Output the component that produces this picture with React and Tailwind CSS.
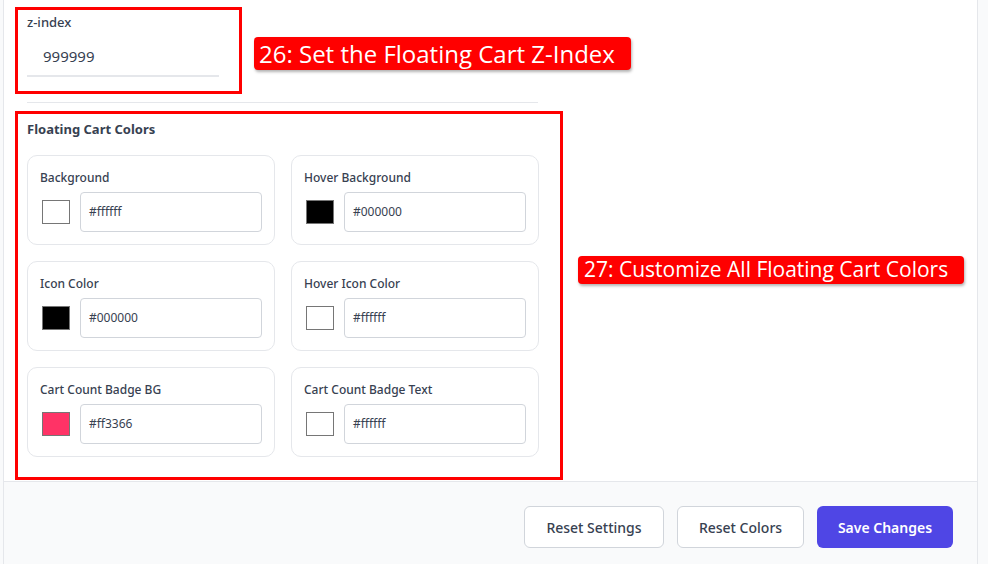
import React from "react";

const font = { fontFamily: '"Noto Sans", "Open Sans", sans-serif' };

function ColorCard({ label, value, swatch }) {
  return (
    <div className="h-[90px] rounded-[10px] border border-[#e5e7eb] bg-white pl-[12px] pr-[12px] pt-[14px]">
      <div className="text-[12px] font-medium leading-[16px] text-[#374151]">{label}</div>
      <div className="mt-[6px] flex items-center">
        <div
          className="ml-[2px] h-[24px] w-[28px] border border-[#767676]"
          style={{ background: swatch }}
        />
        <div className="ml-[10px] flex h-[40px] w-[182px] items-center rounded-[4px] border border-[#d1d5db] bg-white pl-[8px] text-[12px] text-[#374151]">
          {value}
        </div>
      </div>
    </div>
  );
}

export default function App() {
  const cards = [
    ["Background", "#ffffff", "#ffffff"],
    ["Hover Background", "#000000", "#000000"],
    ["Icon Color", "#000000", "#000000"],
    ["Hover Icon Color", "#ffffff", "#ffffff"],
    ["Cart Count Badge BG", "#ff3366", "#ff3366"],
    ["Cart Count Badge Text", "#ffffff", "#ffffff"],
  ];
  return (
    <div className="relative flex h-[564px] w-[988px] overflow-hidden bg-[#f9fafb]" style={font}>
      <div className="ml-[3px] flex w-[975px] flex-col border-x border-[#e5e7eb] bg-white">
        <div className="h-[481px] shrink-0 pl-[11px]">
          <div className="mt-[7px] h-[87px] w-[227px] border-[3px] border-[#ff0000] pl-[9px] pt-[2px]">
            <div className="text-[13px] font-medium leading-[20px] text-[#374151]">z-index</div>
            <div className="mt-[12px] h-[33px] w-[192px] border-b-2 border-[#e5e7eb] pl-[16px] text-[15px] leading-[24px] text-[#374151]">
              999999
            </div>
          </div>
          <div className="ml-[12px] mt-[8px] h-px w-[511px] bg-[#e5e7eb]" />
          <div className="mt-[8px] h-[369px] w-[548px] border-[3px] border-[#ff0000] pl-[9px] pt-[5px]">
            <div className="text-[13px] font-bold leading-[20px] text-[#374151]">Floating Cart Colors</div>
            <div className="mt-[16px] grid w-[512px] grid-cols-2 gap-x-[16px] gap-y-[16px]">
              {cards.map(([l, v, s]) => (
                <ColorCard key={l} label={l} value={v} swatch={s} />
              ))}
            </div>
          </div>
        </div>
        <div className="flex flex-1 justify-end gap-[13px] border-t border-[#e5e7eb] bg-[#f9fafb] pr-[24px] pt-[24px]">
          <button className="h-[42px] w-[140px] rounded-[6px] border border-[#d1d5db] bg-white text-[14px] font-medium text-[#374151]">
            Reset Settings
          </button>
          <button className="h-[42px] w-[127px] rounded-[6px] border border-[#d1d5db] bg-white text-[14px] font-medium text-[#374151]">
            Reset Colors
          </button>
          <button className="h-[42px] w-[136px] rounded-[6px] bg-[#4f46e5] text-[14px] font-semibold text-white">
            Save Changes
          </button>
        </div>
      </div>
      <div
        className="absolute left-[254px] top-[37px] flex h-[33px] w-[377px] items-center rounded-[4px] bg-[#ff0000] pl-[5px] text-[24px] text-white shadow-[1px_2px_3px_rgba(0,0,0,0.3)]"
        style={{ fontFamily: '"Open Sans", sans-serif' }}
      >
        26: Set the Floating Cart Z-Index
      </div>
      <div
        className="absolute left-[578px] top-[256px] flex h-[28px] w-[386px] items-center rounded-[4px] bg-[#ff0000] pl-[6px] text-[21px] text-white shadow-[1px_2px_3px_rgba(0,0,0,0.3)]"
        style={{ fontFamily: '"Open Sans", sans-serif' }}
      >
        27: Customize All Floating Cart Colors
      </div>
    </div>
  );
}
